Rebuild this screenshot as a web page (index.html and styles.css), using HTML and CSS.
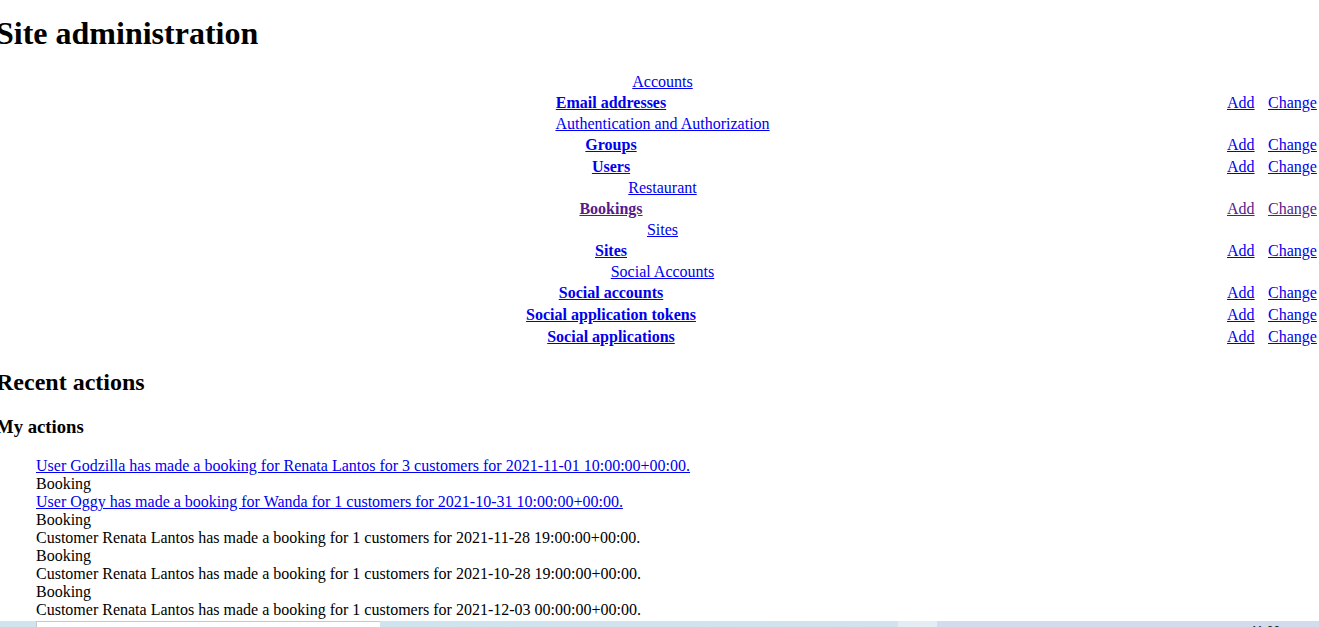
FILE: index.html
```html
<!DOCTYPE html>
<html lang="en">
<head>
<meta charset="utf-8">
<title>Site administration</title>
<link rel="stylesheet" href="styles.css">
</head>
<body>
<div class="page">
  <h1 class="title">Site administration</h1>
  <div class="content-main">
    <div class="module">
      <table class="app">
        <colgroup><col class="c-name"><col class="c-add"><col class="c-change"></colgroup>
        <caption><a href="#" class="section">Accounts</a></caption>
        <tr><th scope="row"><a href="#">Email addresses</a></th><td><a href="#">Add</a></td><td><a href="#">Change</a></td></tr>
      </table>
    </div>
    <div class="module">
      <table class="app">
        <colgroup><col class="c-name"><col class="c-add"><col class="c-change"></colgroup>
        <caption><a href="#" class="section">Authentication and Authorization</a></caption>
        <tr><th scope="row"><a href="#">Groups</a></th><td><a href="#">Add</a></td><td><a href="#">Change</a></td></tr>
        <tr><th scope="row"><a href="#">Users</a></th><td><a href="#">Add</a></td><td><a href="#">Change</a></td></tr>
      </table>
    </div>
    <div class="module">
      <table class="app">
        <colgroup><col class="c-name"><col class="c-add"><col class="c-change"></colgroup>
        <caption><a href="#" class="section">Restaurant</a></caption>
        <tr><th scope="row"><a href="#" class="visited">Bookings</a></th><td><a href="#" class="visited">Add</a></td><td><a href="#" class="visited">Change</a></td></tr>
      </table>
    </div>
    <div class="module">
      <table class="app">
        <colgroup><col class="c-name"><col class="c-add"><col class="c-change"></colgroup>
        <caption><a href="#" class="section">Sites</a></caption>
        <tr><th scope="row"><a href="#">Sites</a></th><td><a href="#">Add</a></td><td><a href="#">Change</a></td></tr>
      </table>
    </div>
    <div class="module">
      <table class="app">
        <colgroup><col class="c-name"><col class="c-add"><col class="c-change"></colgroup>
        <caption><a href="#" class="section">Social Accounts</a></caption>
        <tr><th scope="row"><a href="#">Social accounts</a></th><td><a href="#">Add</a></td><td><a href="#">Change</a></td></tr>
        <tr><th scope="row"><a href="#">Social application tokens</a></th><td><a href="#">Add</a></td><td><a href="#">Change</a></td></tr>
        <tr><th scope="row"><a href="#">Social applications</a></th><td><a href="#">Add</a></td><td><a href="#">Change</a></td></tr>
      </table>
    </div>
  </div>
  <div class="content-related">
    <h2>Recent actions</h2>
    <h3>My actions</h3>
    <ul class="actionlist">
      <li><a href="#">User Godzilla has made a booking for Renata Lantos for 3 customers for 2021-11-01 10:00:00+00:00.</a><br><span class="mini">Booking</span></li>
      <li><a href="#">User Oggy has made a booking for Wanda for 1 customers for 2021-10-31 10:00:00+00:00.</a><br><span class="mini">Booking</span></li>
      <li>Customer Renata Lantos has made a booking for 1 customers for 2021-11-28 19:00:00+00:00.<br><span class="mini">Booking</span></li>
      <li>Customer Renata Lantos has made a booking for 1 customers for 2021-10-28 19:00:00+00:00.<br><span class="mini">Booking</span></li>
      <li>Customer Renata Lantos has made a booking for 1 customers for 2021-12-03 00:00:00+00:00.<br><span class="mini">Booking</span></li>
    </ul>
  </div>
</div>
<div class="taskbar">
  <div class="search-box"></div>
  <div class="tb-fill"></div>
  <div class="tb-light"></div>
  <div class="tb-right"><span class="clock">11:00</span></div>
</div>
</body>
</html>
```
FILE: styles.css
```css
html, body {
  overflow: hidden;
}
body {
  margin: 0;
  font-family: "Liberation Serif", "Times New Roman", serif;
  font-size: 16px;
  color: #000;
  background: #fff;
}
a { color: #0000ee; }
a.visited { color: #551a8b; }

.page {
  margin-left: -4px;
}
.title {
  font-size: 32px;
  font-weight: bold;
  margin: 15px 0 21.44px;
}
.app {
  table-layout: fixed;
  width: 1333px;
  border-spacing: 2px;
}
.app caption {
  text-align: center;
}
.c-name { width: 1226px; }
.c-add { width: 39px; }
.c-change { width: 60px; }
.app th, .app td {
  padding: 1px;
  white-space: nowrap;
}
.app th { text-align: center; font-weight: bold; }
.app td { text-align: left; }

.content-related h2 {
  font-size: 24px;
  margin: 19.92px 0;
}
.content-related h3 {
  font-size: 18.72px;
  margin: 18.72px 0;
}
.actionlist {
  list-style: none;
  margin: 16px 0;
  padding-left: 40px;
}

.taskbar {
  position: fixed;
  left: 0;
  right: 0;
  bottom: 0;
  height: 6px;
  display: flex;
  background: #cfe4ee;
}
.search-box {
  margin-left: 36px;
  width: 343px;
  background: #fff;
  border-top: 1px solid #c4c8cc;
  border-left: 1px solid #c4c8cc;
}
.tb-fill {
  flex: 1;
  background: linear-gradient(90deg, #cfe4ee, #d2e2ee);
}
.tb-light {
  width: 39px;
  background: #e4ecf4;
}
.tb-right {
  width: 382px;
  background: #d3dcec;
  position: relative;
  overflow: hidden;
}
.clock {
  position: absolute;
  left: 314px;
  top: 3px;
  font-family: "Liberation Sans", Arial, sans-serif;
  font-size: 12px;
  color: #222;
}
```
